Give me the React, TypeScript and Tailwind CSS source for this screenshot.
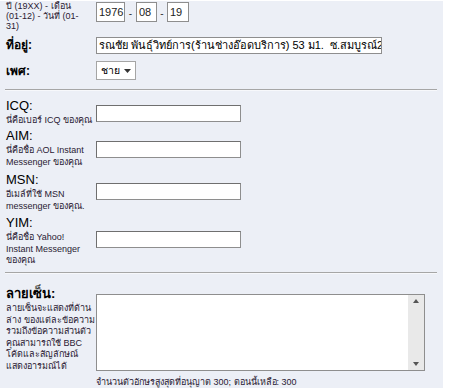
import React from "react";

const font = { fontFamily: '"Liberation Sans", Arial, "Noto Sans", sans-serif' };

const subCls = "whitespace-nowrap text-[9px] leading-[11.5px] text-[#2a1a33]";
const inputCls =
  "h-[17px] w-[145px] border border-[#8e8e8e] border-t-[#6f6f6f] border-l-[#6f6f6f] bg-white";

function Row({
  label,
  bold,
  sub,
  children,
  className,
}: {
  label: React.ReactNode;
  bold?: boolean;
  sub: React.ReactNode;
  children?: React.ReactNode;
  className?: string;
}) {
  return (
    <div className={"flex " + (className || "")}>
      <div className="w-[96px] shrink-0 pl-[6px]">
        <div className={"text-[13px] leading-[14px] text-black " + (bold ? "font-bold" : "")}>{label}</div>
        <div className={subCls + " pt-[2px]"}>{sub}</div>
      </div>
      <div className="flex-1">{children}</div>
    </div>
  );
}

function Hr({ className }: { className?: string }) {
  return (
    <div
      className={
        "ml-[5px] w-[432px] border-t border-b border-t-[#a6a6a6] border-b-[#f7f8fb] " + (className || "")
      }
    />
  );
}

export default function App() {
  return (
    <div className="h-[388px] w-[450px] overflow-hidden bg-white" style={font}>
      <div className="h-full w-[443px] bg-[#ECEFF6]">
        {/* date row */}
        <div className="mt-[1px] flex h-[28px]">
          <div className="w-[90px] shrink-0 whitespace-nowrap pl-[6px] text-[9px] leading-[10px] text-[#2a1a33]">
            ปี (19XX) - เดือน
            <br />
            (01-12) - วันที่ (01-
            <br />
            31)
          </div>
          <div className="flex items-start pt-[1px] text-[10px] text-[#333]">
            <div className="ml-[6px] flex h-[20px] w-[29px] items-center border border-[#8e8e8e] bg-white pl-[2px] text-[11px] text-[#222]">
              1976
            </div>
            <span className="w-[11px] pt-[4px] text-center">-</span>
            <div className="flex h-[20px] w-[21px] items-center border border-[#8e8e8e] bg-white pl-[2px] text-[11px] text-[#222]">
              08
            </div>
            <span className="w-[10px] pt-[4px] text-center">-</span>
            <div className="flex h-[20px] w-[22px] items-center border border-[#8e8e8e] bg-white pl-[2px] text-[11px] text-[#222]">
              19
            </div>
          </div>
        </div>

        {/* address */}
        <div className="flex items-center pt-[7px]">
          <div className="w-[96px] shrink-0 pl-[6px] text-[12px] font-bold text-black">ที่อยู่:</div>
          <div className="flex h-[17px] w-[286px] items-center overflow-hidden whitespace-nowrap border border-[#8e8e8e] bg-white pl-[2px] text-[11px] text-black">
            รณชัย พันธุ์วิทย์การ(ร้านช่างอ๊อดบริการ) 53 ม1.&nbsp; ซ.สมบูรณ์2 ถ.สมบูรณ์
          </div>
        </div>

        {/* gender */}
        <div className="flex items-center pt-[7px]">
          <div className="w-[96px] shrink-0 pl-[6px] text-[12px] font-bold text-black">เพศ:</div>
          <div className="flex h-[19px] w-[40px] items-center justify-between border border-[#a5a5a5] bg-white pl-[4px] pr-[4px] text-[10.5px] text-black">
            <span>ชาย</span>
            <svg width="7" height="4" viewBox="0 0 7 4">
              <path d="M0 0 H7 L3.5 4 Z" fill="#333" />
            </svg>
          </div>
        </div>

        <Hr className="mt-[9px]" />

        <Row className="mt-[8px] h-[30px]" label="ICQ:" sub="นี่คือเบอร์ ICQ ของคุณ">
          <div className={inputCls + " mt-[6px]"} />
        </Row>
        <Row
          className="h-[44px]"
          label="AIM:"
          sub={
            <>
              นี่คือชื่อ AOL Instant
              <br />
              Messenger ของคุณ
            </>
          }
        >
          <div className={inputCls + " mt-[12px]"} />
        </Row>
        <Row
          className="h-[43px]"
          label="MSN:"
          sub={
            <>
              อีเมล์ที่ใช้ MSN
              <br />
              messenger ของคุณ.
            </>
          }
        >
          <div className={inputCls + " mt-[10px]"} />
        </Row>
        <Row
          className="h-[56px]"
          label="YIM:"
          sub={
            <>
              นี่คือชื่อ Yahoo!
              <br />
              Instant Messenger
              <br />
              ของคุณ
            </>
          }
        >
          <div className={inputCls + " mt-[15px]"} />
        </Row>

        <Hr />

        <Row
          className="mt-[13px]"
          label="ลายเซ็น:"
          bold
          sub={
            <>
              ลายเซ็นจะแสดงที่ด้าน
              <br />
              ล่าง ของแต่ละข้อความ
              <br />
              รวมถึงข้อความส่วนตัว
              <br />
              คุณสามารถใช้ BBC
              <br />
              โค้ดและสัญลักษณ์
              <br />
              แสดงอารมณ์ได้
            </>
          }
        >
          <div className="mt-[7px] flex h-[77px] w-[329px] border border-[#8e8e8e] bg-white">
            <div className="flex-1" />
            <div className="flex w-[16px] flex-col items-center justify-between bg-[#e9e9e9] py-[4px]">
              <svg width="6" height="4" viewBox="0 0 6 4">
                <path d="M0 4 H6 L3 0 Z" fill="#555" />
              </svg>
              <svg width="6" height="4" viewBox="0 0 6 4">
                <path d="M0 0 H6 L3 4 Z" fill="#555" />
              </svg>
            </div>
          </div>
          <div className="mt-[5px] whitespace-nowrap text-[9px] leading-[12px] text-[#2a1a33]">
            จำนวนตัวอักษรสูงสุดที่อนุญาต 300; ตอนนี้เหลือ: 300
          </div>
        </Row>
      </div>
    </div>
  );
}
